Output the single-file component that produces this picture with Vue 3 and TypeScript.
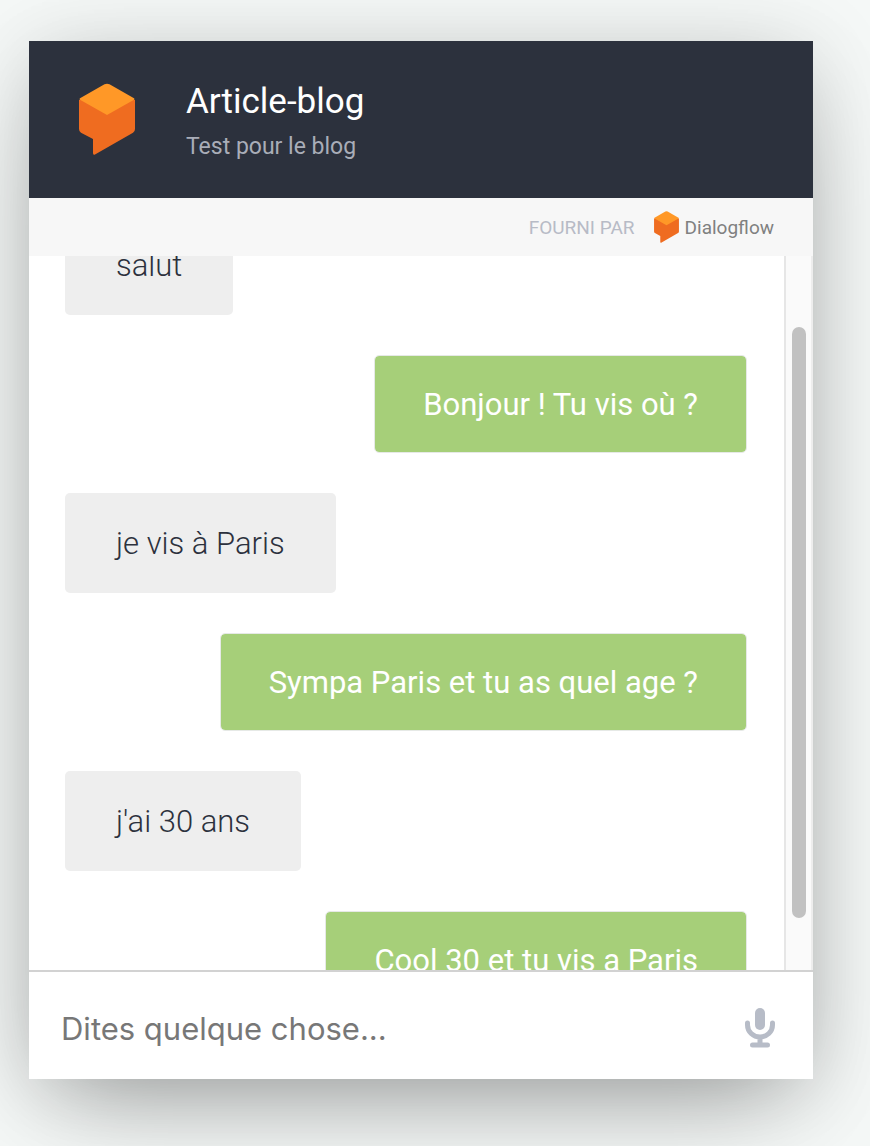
<script setup lang="ts">
import { onMounted, ref } from 'vue'

interface Message {
  id: number
  from: 'user' | 'agent'
  text: string
}

const messages: Message[] = [
  { id: 1, from: 'user', text: 'salut' },
  { id: 2, from: 'agent', text: 'Bonjour ! Tu vis où ?' },
  { id: 3, from: 'user', text: 'je vis à Paris' },
  { id: 4, from: 'agent', text: 'Sympa Paris et tu as quel age ?' },
  { id: 5, from: 'user', text: "j'ai 30 ans" },
  { id: 6, from: 'agent', text: 'Cool 30 et tu vis a Paris' },
]

const draft = ref('')
const log = ref<HTMLElement | null>(null)
const initialScroll = 81

onMounted(() => {
  if (log.value) log.value.scrollTop = initialScroll
})
</script>

<template>
  <div class="page">
    <main class="card">
      <header class="head">
        <svg class="logo" viewBox="0 0 56 72" aria-hidden="true">
          <path fill="#ef6c20" d="M0 17L28 10L56 17V46Q56 48.500 54 49.700L16 71.400Q14 72.400 14 70V56L2 49.700Q0 48.500 0 46Z" />
          <path fill="#ff9827" d="M1 15.200L25.500 1.300Q28 0 30.500 1.300L55 15.200Q56 16 55 16.800L28 32L1 16.800Q0 16 1 15.200Z" />
        </svg>
        <div class="titles">
          <h1>Article-blog</h1>
          <p>Test pour le blog</p>
        </div>
      </header>

      <div class="powered">
        <span>FOURNI PAR</span>
        <a href="#" class="brand">
          <svg class="brand-logo" viewBox="0 0 56 72" aria-hidden="true">
            <path fill="#ef6c20" d="M0 17L28 10L56 17V46Q56 48.500 54 49.700L16 71.400Q14 72.400 14 70V56L2 49.700Q0 48.500 0 46Z" />
            <path fill="#ff9827" d="M1 15.200L25.500 1.300Q28 0 30.500 1.300L55 15.200Q56 16 55 16.800L28 32L1 16.800Q0 16 1 15.200Z" />
          </svg>
          <span class="brand-name">Dialogflow</span>
        </a>
      </div>

      <section class="chat">
        <div ref="log" class="log" role="log">
          <div v-for="m in messages" :key="m.id" class="bubble" :class="m.from">{{ m.text }}</div>
        </div>
        <div class="track" aria-hidden="true"><div class="thumb"></div></div>
      </section>

      <form class="ask" @submit.prevent>
        <input v-model="draft" type="text" aria-label="Message" placeholder="Dites quelque chose..." />
        <button type="button" aria-label="Micro">
          <svg viewBox="0 0 30 40" aria-hidden="true">
            <rect x="10" y="0" width="10" height="22" rx="5" fill="#b7bcc7" />
            <path d="M2.500 15V17A12.500 12 0 0 0 27.500 17V15M15 29V36M7.500 37H22.500" fill="none" stroke="#b7bcc7" stroke-width="5" stroke-linecap="round" />
          </svg>
        </button>
      </form>
    </main>
  </div>
</template>

<style>
body {
  margin: 0;
  background: #f5f8f7;
}
</style>

<style scoped>
.page {
  box-sizing: border-box;
  display: flex;
  flex-direction: column;
  height: 100vh;
  padding: 41px 57px 67px 29px;
  overflow: hidden;
  font-family: Roboto, "Liberation Sans", sans-serif;
}

.card {
  display: flex;
  flex: 1;
  flex-direction: column;
  min-height: 0;
  background: #fff;
  box-shadow:
    0 40px 100px -30px rgba(0, 0, 0, 0.34),
    0 8px 80px rgba(0, 0, 0, 0.14);
}

.head {
  display: flex;
  align-items: flex-start;
  gap: 51px;
  padding: 40px 50px 39px;
  background: #2c313d;
}

.logo {
  width: 56px;
  height: 72px;
  margin-top: 2px;
}

.titles h1 {
  margin: 0;
  color: #fff;
  font-size: 35px;
  font-weight: 400;
  line-height: 42px;
}

.titles p {
  height: 26px;
  margin: 10px 0 0;
  overflow: hidden;
  color: #a9adb8;
  font-size: 23px;
  font-weight: 400;
  line-height: 28px;
}

.powered {
  display: flex;
  align-items: center;
  justify-content: flex-end;
  gap: 19px;
  height: 58px;
  padding-right: 39px;
  background: #f7f7f7;
  color: #b7bbc6;
  font-size: 19px;
}

.brand {
  display: flex;
  align-items: center;
  gap: 6px;
  color: #808080;
  text-decoration: none;
}

.brand-logo {
  width: 25px;
  height: 32px;
}

.chat {
  display: flex;
  flex: 1;
  min-height: 0;
}

.log {
  display: flex;
  flex: 1;
  flex-direction: column;
  gap: 40px;
  padding: 40px 37px 20px 36px;
  overflow-y: auto;
  scrollbar-width: none;
}

.bubble {
  flex: none;
  padding: 31px 51px 29px;
  border-radius: 5px;
  font-size: 31px;
  line-height: 40px;
}

.user {
  align-self: flex-start;
  background: #eee;
  color: #2c313d;
  font-weight: 300;
}

.agent {
  align-self: flex-end;
  padding: 29px 48px 27px;
  border: 1px solid #e6e9e6;
  background: #a6cf79;
  background-clip: padding-box;
  color: #fff;
}

.track {
  box-sizing: border-box;
  width: 29px;
  padding: 71px 5px 52px 6px;
  border-right: 2px solid #ededed;
  border-left: 2px solid #e6e6e6;
  background: #fafafa;
}

.thumb {
  height: 100%;
  border-radius: 8px;
  background: #c1c1c1;
}

.ask {
  display: flex;
  align-items: center;
  height: 102px;
  padding: 5px 38px 0 32px;
  border-top: 2px solid #d2d2d2;
}

.ask input {
  flex: 1;
  min-width: 0;
  height: 60px;
  padding: 0;
  border: 0;
  outline: 0;
  background: transparent;
  color: #2c313d;
  font-family: Inter, "Liberation Sans", sans-serif;
  font-size: 31px;
}

.ask input::placeholder {
  color: #777;
  opacity: 1;
}

.ask button {
  padding: 0;
  border: 0;
  background: none;
}

.ask svg {
  display: block;
  width: 30px;
  height: 40px;
}
</style>
